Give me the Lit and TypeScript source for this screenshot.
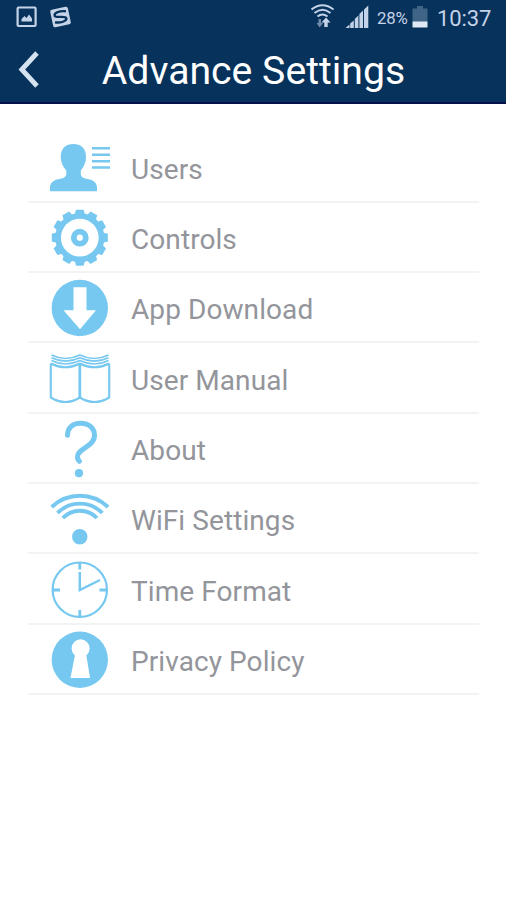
import { LitElement, html, svg, css, SVGTemplateResult } from "lit";
import { customElement } from "lit/decorators.js";

const TEETH = 12;

function gearPath(cx: number, cy: number): string {
  const pts: string[] = [];
  const step = (Math.PI * 2) / TEETH;
  const add = (r: number, a: number) =>
    pts.push(`${(cx + r * Math.sin(a)).toFixed(2)} ${(cy - r * Math.cos(a)).toFixed(2)}`);
  for (let i = 0; i < TEETH; i++) {
    const a = i * step;
    add(24.6, a - step * 0.38);
    add(28.3, a - step * 0.26);
    add(28.3, a + step * 0.26);
    add(24.6, a + step * 0.38);
  }
  return `M${pts.join("L")}Z`;
}

const users = svg`
  <path class="fill" d="M25.3 12C33 12 38 16.500 38 24.500C38 30.500 36 34.500 32.800 38.500V42.500C33.300 45.500 36 46.300 41 47.300C46.500 48.600 49 51.500 49 56V59.300H2V56C2 51.500 4.500 48.600 10 47.300C15 46.300 17.800 45.500 18.300 42.500V38.500C15 34.500 12.800 30.500 12.800 24.500C12.800 16.500 17.800 12 25.300 12Z"/>
  <path class="line" stroke-width="2.400" d="M44 16.300H62M44 22.700H62M44 29.200H62M44 35.500H62"/>`;

const controls = svg`
  <path class="fill" d=${gearPath(31.8, 35.7)}/>
  <circle class="paper" cx="31.800" cy="35.700" r="18.900"/>
  <circle class="line" cx="31.800" cy="35.700" r="6" stroke-width="5.800"/>`;

const download = svg`
  <circle class="fill" cx="31.800" cy="36" r="28.200"/>
  <path class="paper" d="M25.500 15.300H38.500V38.300H48L32 57.300L15.500 38.300H25.500Z"/>`;

const manual = svg`
  <g class="line" stroke-width="2.100" stroke-linejoin="round">
    <path d="M2.800 20.500V54.500Q17.500 63.500 31.800 54.500Q46.500 63.500 61.200 54.500V20.500"/>
    <path d="M31.800 21V55" stroke-width="2.800"/>
    <path d="M2.800 20.500Q17.500 28 31.800 20.500Q46.500 28 61.200 20.500"/>
    <path stroke-width="1.600" d="M3.500 17.500Q17.500 24.500 31.800 17.500Q46.500 24.500 60.500 17.500M3.500 14.700Q17.500 21.500 31.800 14.700Q46.500 21.500 60.500 14.700M3.500 12Q17.500 19 31.800 12Q46.500 19 60.500 12"/>
  </g>`;

const about = svg`
  <path class="line round" stroke-width="5" d="M19.500 22.300C19.500 14.500 25 10.200 32.500 10.200C41 10.200 46.500 15 46.500 22.500C46.500 33.500 29.500 35.500 29.500 43.500Q29.500 46.700 31.500 48.300"/>
  <circle class="fill" cx="31" cy="60.200" r="4.100"/>`;

const wifi = svg`
  <g class="line" stroke-width="3.900">
    <path d="M3.700 24A41 41 0 0 1 60 24"/>
    <path d="M9.500 30A31.500 31.500 0 0 1 54.300 30"/>
    <path d="M14.800 35A23.800 23.800 0 0 1 49 35"/>
  </g>
  <circle class="fill" cx="31.800" cy="53.700" r="7.700"/>`;

const clock = svg`
  <circle class="line" cx="31.800" cy="35.700" r="27.200" stroke-width="2.200"/>
  <path class="line" stroke-width="2.800" d="M31.800 8.500V15.500M31.800 56V63M4 36H12M51.500 36H60"/>
  <path class="line" stroke-width="2.500" d="M31.800 18V36L52 26"/>`;

const privacy = svg`
  <circle class="fill" cx="31.800" cy="35.800" r="28.200"/>
  <circle class="paper" cx="32.600" cy="24.300" r="9"/>
  <path class="paper" d="M27.500 28H37.800L42 54H22.500Z"/>`;

interface Item {
  label: string;
  icon: SVGTemplateResult;
}

const ITEMS: Item[] = [
  { label: "Users", icon: users },
  { label: "Controls", icon: controls },
  { label: "App Download", icon: download },
  { label: "User Manual", icon: manual },
  { label: "About", icon: about },
  { label: "WiFi Settings", icon: wifi },
  { label: "Time Format", icon: clock },
  { label: "Privacy Policy", icon: privacy },
];

@customElement("status-bar")
export class StatusBar extends LitElement {
  static styles = css`
    :host {
      display: flex;
      height: 36px;
      padding: 0 15px 0 16px;
      align-items: center;
      color: #c5d3e8;
      font-family: Roboto, sans-serif;
    }
    svg { display: block; flex: none; }
    .notes { width: 56px; height: 36px; }
    .signals { width: 60px; height: 36px; margin-left: auto; }
    .percent { width: 32px; margin-left: 6px; font-size: 16.800px; letter-spacing: -0.150px; white-space: nowrap; }
    .battery { width: 16px; height: 36px; margin-left: 3px; }
    .time { width: 54px; margin-left: 9px; font-size: 22px; letter-spacing: -0.100px; white-space: nowrap; }
  `;

  render() {
    return html`
      <svg class="notes" viewBox="16 0 56 36">
        <rect x="17.600" y="7.500" width="18" height="18.500" rx="1" fill="none" stroke="#c5d3e8" stroke-width="2.200"/>
        <path fill="#c5d3e8" d="M21.500 21.500V19L24.500 16L26.500 18L29 14.500L32 18.500V21.500Z"/>
        <g transform="rotate(-12 60.500 17)">
          <rect x="51.500" y="8" width="18" height="18" rx="2" fill="#c5d3e8"/>
          <path fill="none" stroke="#07325b" stroke-width="2.300" d="M67 12.500C61 10.500 55 11.500 55 14.500C55 17.500 66 16 66 19.500C66 22.500 59 23 54 21"/>
        </g>
      </svg>
      <svg class="signals" viewBox="312 0 60 36">
        <g fill="none" stroke="#c5d3e8" stroke-width="2">
          <path d="M312.500 9.500Q323.500 1 334.500 9.500"/>
          <path d="M315.500 13Q323.500 6.500 331.500 13"/>
          <path d="M318.500 16.500Q323.500 12.500 328.500 16.500"/>
        </g>
        <path fill="#c5d3e8" d="M327 17.500L331.500 22.500H328.700V27H325.300V22.500H322.500Z"/>
        <path fill="#7189ab" d="M319.500 19H322V23H324L320.700 27.500L317.500 23H319.500Z"/>
        <path fill="#c5d3e8" d="M346.500 28L350.500 24.500V28ZM351.200 23.500L354.800 20.500V28H351.200ZM355.800 19L359.400 15.500V28H355.800ZM360.400 14L364 10.500V28H360.400ZM365 9.500L369.300 5.500V28H365Z"/>
      </svg>
      <span class="percent">28%</span>
      <svg class="battery" viewBox="411.500 0 16 36">
        <path fill="#3f6486" d="M416.500 6H422.500V8.500H427V22H412V8.500H416.500Z"/>
        <rect x="412" y="21.500" width="15" height="6" fill="#dfe8f3"/>
      </svg>
      <span class="time">10:37</span>
    `;
  }
}

@customElement("settings-row")
export class SettingsRow extends LitElement {
  static properties = { item: { attribute: false } };
  declare item: Item;

  static styles = css`
    :host {
      display: flex;
      box-sizing: border-box;
      align-items: center;
      height: 70.330px;
      padding-left: 20px;
      border-bottom: 2px solid #f3f3f4;
      color: #93959b;
      font: 28px Roboto, sans-serif;
    }
    .icon { width: 64px; height: 70px; margin: -1px 0; flex: none; }
    .label { margin: 5px 0 0 19px; white-space: nowrap; letter-spacing: 0.080px; }
    .fill { fill: #76c8f0; }
    .paper { fill: #fff; }
    .line { fill: none; stroke: #76c8f0; }
    .round { stroke-linecap: round; stroke-linejoin: round; }
  `;

  render() {
    return html`
      <svg class="icon" viewBox="0 0 64 70">${this.item.icon}</svg>
      <span class="label">${this.item.label}</span>
    `;
  }
}

@customElement("app-root")
export class AppRoot extends LitElement {
  static styles = css`
    :host { display: block; min-height: 900px; background: #fff; }
    .header { height: 104px; box-sizing: border-box; background: #07325b; border-bottom: 2px solid #03124a; }
    .title-bar { display: grid; grid-template-columns: 60px 1fr 60px; align-items: center; height: 66px; }
    .back { display: block; width: 22px; height: 38px; margin-left: 18px; }
    .title { margin: 4px 0 0 1px; color: #fff; font: 400 39.200px Roboto, sans-serif; text-align: center; white-space: nowrap; }
    .list { padding: 28.500px 27px 0 28px; }
  `;

  render() {
    return html`
      <header class="header">
        <status-bar></status-bar>
        <div class="title-bar">
          <svg class="back" viewBox="0 0 22 38">
            <path fill="none" stroke="#d5e2f0" stroke-width="4.800" d="M19 3L3.800 19.500L19 36"/>
          </svg>
          <h1 class="title">Advance Settings</h1>
        </div>
      </header>
      <main class="list">
        ${ITEMS.map((item) => html`<settings-row .item=${item}></settings-row>`)}
      </main>
    `;
  }
}
